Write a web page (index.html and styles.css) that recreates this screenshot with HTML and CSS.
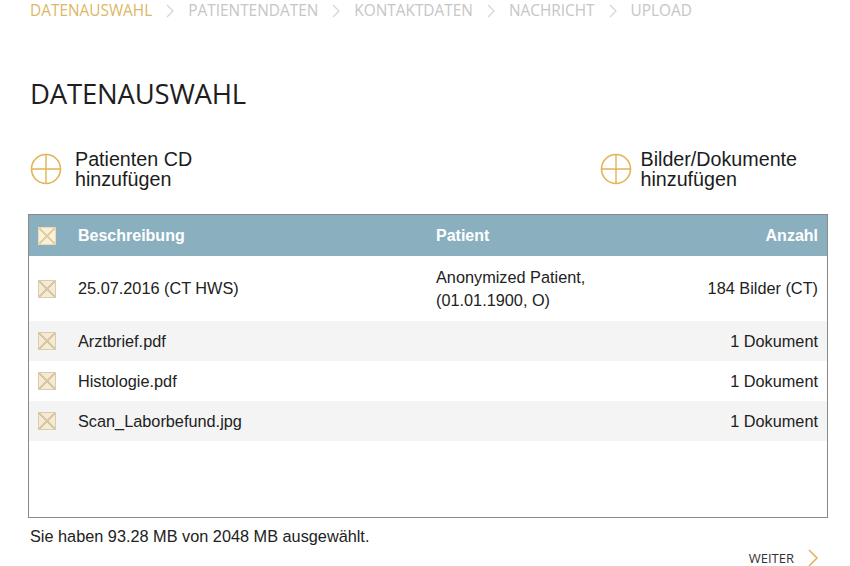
FILE: index.html
```html
<!DOCTYPE html>
<html lang="de">
<head>
    <meta charset="UTF-8">
    <title>Datenauswahl</title>
    <link rel="stylesheet" href="styles.css">
</head>
<body>
    <nav class="steps">
        <span class="step active">DATENAUSWAHL</span>
        <svg class="sep" width="8" height="14" viewBox="0 0 8 14"><path d="M1 1L7 7L1 13" fill="none" stroke="#d4d4d4" stroke-width="1.2"/></svg>
        <span class="step">PATIENTENDATEN</span>
        <svg class="sep" width="8" height="14" viewBox="0 0 8 14"><path d="M1 1L7 7L1 13" fill="none" stroke="#d4d4d4" stroke-width="1.2"/></svg>
        <span class="step">KONTAKTDATEN</span>
        <svg class="sep" width="8" height="14" viewBox="0 0 8 14"><path d="M1 1L7 7L1 13" fill="none" stroke="#d4d4d4" stroke-width="1.2"/></svg>
        <span class="step">NACHRICHT</span>
        <svg class="sep" width="8" height="14" viewBox="0 0 8 14"><path d="M1 1L7 7L1 13" fill="none" stroke="#d4d4d4" stroke-width="1.2"/></svg>
        <span class="step">UPLOAD</span>
    </nav>

    <h1 class="title">DATENAUSWAHL</h1>

    <div class="actions">
        <a class="add" href="#">
            <svg class="plus" width="32" height="32" viewBox="0 0 32 32">
                <circle cx="16" cy="16" r="14.5" fill="none" stroke="#e2b456" stroke-width="1.6"/>
                <path d="M16 1.5V30.5M1.5 16H30.5" stroke="#e2b456" stroke-width="1.4"/>
            </svg>
            <span>Patienten CD<br>hinzufügen</span>
        </a>
        <a class="add" href="#">
            <svg class="plus" width="32" height="32" viewBox="0 0 32 32">
                <circle cx="16" cy="16" r="14.5" fill="none" stroke="#e2b456" stroke-width="1.6"/>
                <path d="M16 1.5V30.5M1.5 16H30.5" stroke="#e2b456" stroke-width="1.4"/>
            </svg>
            <span>Bilder/Dokumente<br>hinzufügen</span>
        </a>
    </div>

    <div class="table-box">
        <table class="files">
            <thead>
                <tr>
                    <th class="chk"><span class="box"></span></th>
                    <th class="desc">Beschreibung</th>
                    <th class="pat">Patient</th>
                    <th class="num">Anzahl</th>
                </tr>
            </thead>
            <tbody>
                <tr class="tall">
                    <td class="chk"><span class="box"></span></td>
                    <td>25.07.2016 (CT HWS)</td>
                    <td>Anonymized Patient,<br>(01.01.1900, O)</td>
                    <td class="num">184 Bilder (CT)</td>
                </tr>
                <tr>
                    <td class="chk"><span class="box"></span></td>
                    <td>Arztbrief.pdf</td>
                    <td></td>
                    <td class="num">1 Dokument</td>
                </tr>
                <tr>
                    <td class="chk"><span class="box"></span></td>
                    <td>Histologie.pdf</td>
                    <td></td>
                    <td class="num">1 Dokument</td>
                </tr>
                <tr>
                    <td class="chk"><span class="box"></span></td>
                    <td>Scan_Laborbefund.jpg</td>
                    <td></td>
                    <td class="num">1 Dokument</td>
                </tr>
            </tbody>
        </table>
    </div>

    <p class="summary">Sie haben 93.28 MB von 2048 MB ausgewählt.</p>

    <div class="next">
        <a href="#">WEITER</a>
        <svg width="12" height="18" viewBox="0 0 12 18">
            <path d="M2 1L10 9L2 17" fill="none" stroke="#e2b456" stroke-width="1.6"/>
        </svg>
    </div>
</body>
</html>
```

FILE: styles.css
```css
body {
    margin: 0;
    padding: 0 22px 0 28px;
    font-family: "Liberation Sans", Arial, sans-serif;
    color: #222;
    background: #fff;
}
.steps {
    padding-left: 2px;
    height: 21px;
    font-family: "Open Sans", sans-serif;
    font-size: 15.4px;
    line-height: 21px;
    color: #c6c6c6;
    display: flex;
    gap: 14px;
    align-items: center;
}
.steps .active {
    color: #dcb866;
}
.title {
    margin: 58px 0 0 2px;
    font-family: "Open Sans", sans-serif;
    font-weight: 400;
    font-size: 27.5px;
    letter-spacing: -0.2px;
    color: #1e1e1e;
    line-height: 30px;
}
.actions {
    display: flex;
    justify-content: space-between;
    margin-top: 40px;
    padding-right: 31px;
}
.add {
    display: flex;
    align-items: center;
    gap: 13px;
    text-decoration: none;
    color: #1c1c1c;
    font-size: 19.7px;
    line-height: 20px;
}
.add .plus {
    margin-left: 2px;
}
.add:last-child {
    gap: 9px;
}
.table-box {
    margin-top: 25px;
    width: 798px;
    height: 302px;
    border: 1px solid #8a8a8a;
}
.files {
    width: 100%;
    border-collapse: collapse;
    font-size: 16.3px;
}
.files th {
    background: #8ab0c0;
    color: #fff;
    font-weight: bold;
    font-size: 16px;
    height: 41px;
    text-align: left;
    padding: 0;
}
.files td {
    height: 40px;
    padding: 0;
    line-height: 23px;
}
.files tr.tall td {
    height: 65px;
}
.files tbody tr:nth-child(even) td {
    background: #f4f4f4;
}
.files .chk {
    width: 40px;
    padding-left: 9px;
}
.files .desc {
    width: 358px;
}
.files .num {
    text-align: right;
    padding-right: 9px;
}
.box {
    display: block;
    width: 16px;
    height: 16px;
    border: 1px solid #d9cdb0;
    background:
        linear-gradient(45deg, transparent 46%, #d6c7a6 46%, #d6c7a6 54%, transparent 54%),
        linear-gradient(-45deg, transparent 46%, #d6c7a6 46%, #d6c7a6 54%, transparent 54%),
        #f6ebd2;
}
th .box {
    border-color: #e9d9b6;
    background:
        linear-gradient(45deg, transparent 45%, #e3cfa6 45%, #e3cfa6 55%, transparent 55%),
        linear-gradient(-45deg, transparent 45%, #e3cfa6 45%, #e3cfa6 55%, transparent 55%),
        #fbf0d8;
}
.summary {
    margin: 9px 0 0 2px;
    font-size: 16.3px;
    color: #222;
}
.next {
    display: flex;
    justify-content: flex-end;
    align-items: center;
    gap: 13px;
    margin-top: 3px;
    padding-right: 9px;
}
.next a {
    font-family: "Open Sans", sans-serif;
    font-size: 13px;
    line-height: 17px;
    color: #333;
    text-decoration: none;
}
```
